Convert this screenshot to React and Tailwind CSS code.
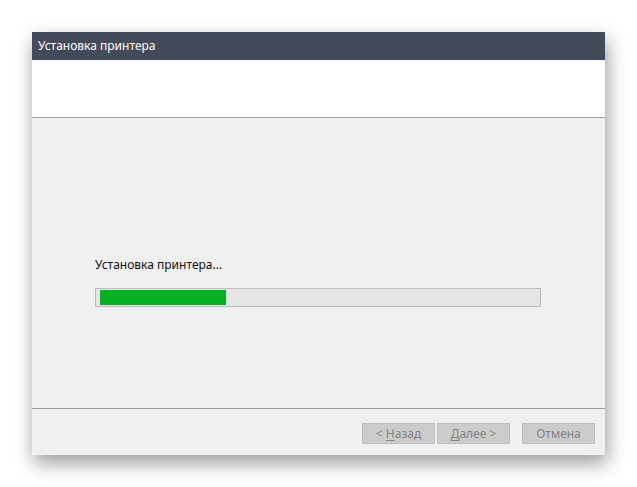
export default function App() {
  const progress = 29;
  const font = { fontFamily: "'Noto Sans', 'Open Sans', sans-serif" };

  return (
    <div className="w-[637px] h-[487px] bg-white overflow-hidden" style={font}>
      <div className="ml-[32px] mt-[32px] w-[573px] h-[423px] flex flex-col bg-[#f0f0f0] shadow-[2px_8px_18px_rgba(0,0,0,0.4)]">
        {/* title bar */}
        <div className="h-[28px] bg-[#434a5a] flex items-center px-[6px] text-[12px] text-white shrink-0">
          Установка принтера
        </div>

        {/* header */}
        <div className="h-[58px] bg-white border-b border-[#a0a0a0] shrink-0" />

        {/* body */}
        <div className="flex-1 pl-[63px] pt-[139px] border-b border-[#a0a0a0]">
          <p className="text-[12px] leading-[16px] text-[#111]">Установка принтера...</p>
          <div className="mt-[15px] w-[446px] h-[19px] border border-[#bcbcbc] bg-[#e6e6e6] px-[4px] py-px">
            <div className="h-full bg-[#06b025]" style={{ width: `${progress}%` }} />
          </div>
        </div>

        {/* footer */}
        <div className="h-[46px] shrink-0 flex items-start justify-end pt-[14px] pr-[10px]">
          <div className="flex gap-[2px]">
            <FooterButton>
              &lt; <span className="underline underline-offset-2">Н</span>азад
            </FooterButton>
            <FooterButton>
              <span className="underline underline-offset-2">Д</span>алее &gt;
            </FooterButton>
          </div>
          <div className="ml-[12px]">
            <FooterButton>Отмена</FooterButton>
          </div>
        </div>
      </div>
    </div>
  );
}

function FooterButton({ children }) {
  return (
    <button
      disabled
      className="w-[73px] h-[21px] bg-[#cccccc] border border-[#bfbfbf] text-[12px] leading-none text-[#838383] flex items-center justify-center"
    >
      <span>{children}</span>
    </button>
  );
}
